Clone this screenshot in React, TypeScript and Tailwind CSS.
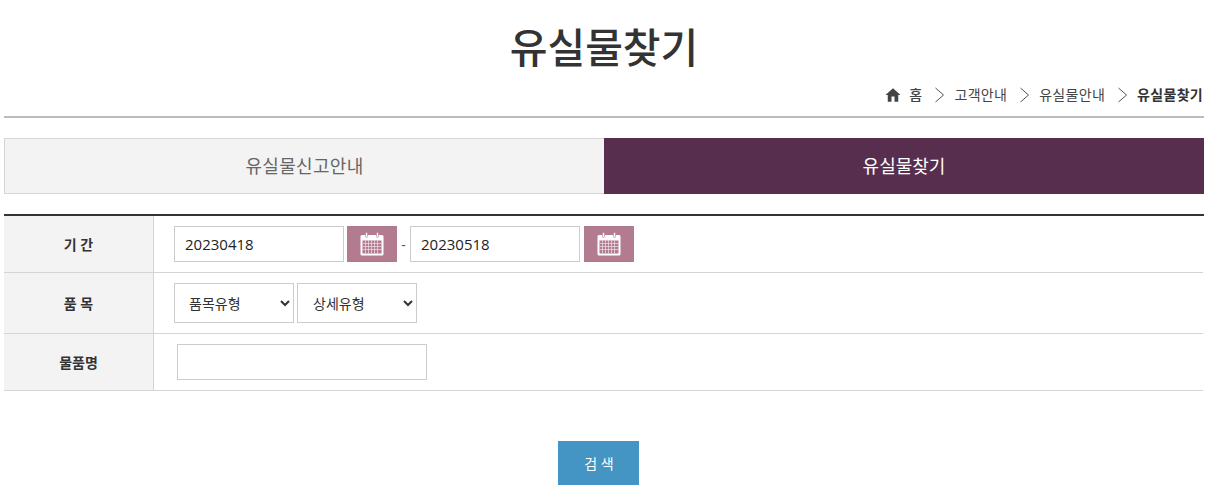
import React from 'react';

const font = { fontFamily: '"Open Sans", "Noto Sans CJK KR", sans-serif' };

const CalendarButton = () => (
  <button type="button" className="flex h-[36px] w-[50px] shrink-0 items-center justify-center bg-[#b27b90]">
    <svg width="24" height="24" viewBox="0 0 24 24" fill="none">
      <rect x="0.5" y="3" width="23" height="20.5" rx="1.5" fill="#fff" />
      <rect x="5.5" y="0.5" width="2" height="5" rx="1" fill="#fff" stroke="#b27b90" strokeWidth="0.6" />
      <rect x="16.5" y="0.5" width="2" height="5" rx="1" fill="#fff" stroke="#b27b90" strokeWidth="0.6" />
      <rect x="2.5" y="8.5" width="19" height="13" fill="#b27b90" />
      <path d="M5.5 8.5v13M8.5 8.5v13M11.5 8.5v13M14.5 8.5v13M17.5 8.5v13M2.5 11.5h19M2.5 14.5h19M2.5 17.5h19" stroke="#e8d6dd" strokeWidth="0.8" />
    </svg>
  </button>
);

const Chevron = () => (
  <svg width="12" height="16" viewBox="0 0 12 16" fill="none" className="mr-[8px] ml-[12px]">
    <path d="M1.5 1 9.5 8 1.5 15" stroke="#555" strokeWidth="1" />
  </svg>
);

const Row = ({ label, children, className }: { label: string; children: React.ReactNode; className: string }) => (
  <div className={`mr-[1px] flex border-b border-[#d5d5d5] ${className}`}>
    <div className="flex w-[150px] shrink-0 items-center justify-center border-r border-[#d5d5d5] bg-[#f3f3f3] text-[14px] font-bold text-[#333]">
      {label}
    </div>
    <div className="flex flex-1 items-center">{children}</div>
  </div>
);

export default function App() {
  return (
    <div style={font} className="h-[496px] w-[1207px] overflow-hidden bg-white pl-[4px] pr-[3px] text-[#333]">
      <h1 className="h-[76px] pt-[16px] text-center text-[41px] leading-[62px] font-medium text-[#333]">유실물찾기</h1>

      <div className="flex h-[42px] items-center justify-end border-b-2 border-[#bbb] pr-[1px] pb-[3px] text-[14px] tracking-[0.3px] text-[#444]">
        <svg width="18" height="18" viewBox="0 0 24 24" fill="#444" className="mr-[7px]">
          <path d="M10 21v-7h4v7h5v-9h3L12 3 2 12h3v9z" />
        </svg>
        <span className="font-medium">홈</span>
        <Chevron />
        <span>고객안내</span>
        <Chevron />
        <span>유실물안내</span>
        <Chevron />
        <span className="font-bold text-[#333]">유실물찾기</span>
      </div>

      <div className="mt-[20px] flex h-[56px] text-[18px]">
        <div className="flex w-[600px] items-center justify-center border border-r-0 border-[#d5d5d5] bg-[#f3f3f3] tracking-[0.3px] text-[#666]">
          유실물신고안내
        </div>
        <div className="flex w-[600px] items-center justify-center bg-[#582e4e] text-white">유실물찾기</div>
      </div>

      <div className="mt-[20px] border-t-2 border-[#333]">
        <Row label="기 간" className="h-[57px]">
          <div className="ml-[20px] flex items-center text-[15px]">
            <input readOnly value="20230418" className="h-[36px] w-[170px] border border-[#ccc] px-[10px] text-[#222] outline-none" />
            <span className="ml-[3px]"><CalendarButton /></span>
            <span className="mx-[4px] w-[5px] text-center text-[14px] text-[#555]">-</span>
            <input readOnly value="20230518" className="h-[36px] w-[170px] border border-[#ccc] px-[10px] text-[#222] outline-none" />
            <span className="ml-[4px]"><CalendarButton /></span>
          </div>
        </Row>
        <Row label="품 목" className="h-[61px]">
          <div className="ml-[20px] flex gap-[3px] text-[14px]">
            <select className="h-[40px] w-[120px] border border-[#ccc] bg-white pl-[10px] text-[#333] outline-none">
              <option>품목유형</option>
            </select>
            <select className="h-[40px] w-[120px] border border-[#ccc] bg-white pl-[11px] text-[#333] outline-none">
              <option>상세유형</option>
            </select>
          </div>
        </Row>
        <Row label="물품명" className="h-[57px]">
          <input className="ml-[23px] h-[36px] w-[250px] border border-[#ccc] outline-none" />
        </Row>
      </div>

      <div className="mt-[50px] flex justify-center pr-[12px]">
        <button type="button" className="h-[44px] w-[81px] bg-[#4495c4] pl-[2px] text-[14px] text-white">검 색</button>
      </div>
    </div>
  );
}
